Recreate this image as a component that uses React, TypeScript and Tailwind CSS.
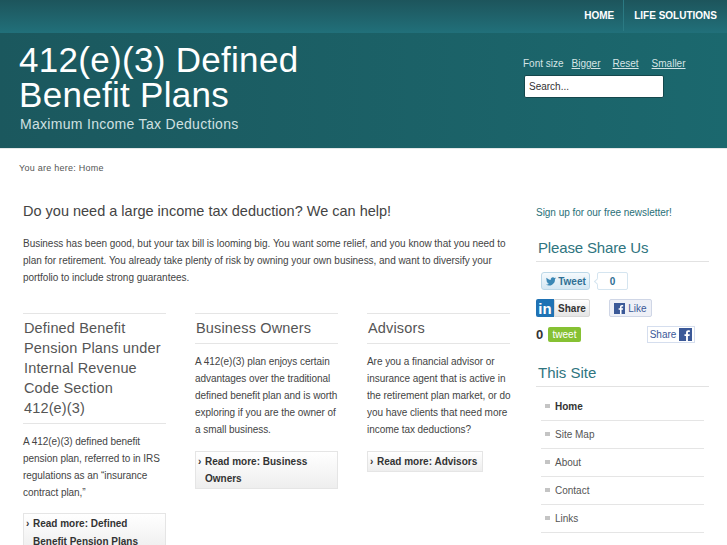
const FONT = "font-['Liberation_Sans',Arial,sans-serif]"

const columns = [
    {
        title: 'Defined Benefit Pension Plans under Internal Revenue Code Section 412(e)\u2060(3)',
        body: 'A 412(e)(3) defined benefit pension plan, referred to in IRS regulations as an “insurance contract plan,”',
        more: 'Read more: Defined Benefit Pension Plans',
    },
    {
        title: 'Business Owners',
        body: 'A 412(e)(3) plan enjoys certain advantages over the traditional defined benefit plan and is worth exploring if you are the owner of a small business.',
        more: 'Read more: Business Owners',
    },
    {
        title: 'Advisors',
        body: 'Are you a financial advisor or insurance agent that is active in the retirement plan market, or do you have clients that need more income tax deductions?',
        more: 'Read more: Advisors',
    },
]

const siteLinks = ['Home', 'Site Map', 'About', 'Contact', 'Links']

function FbMark({ className }: { className: string }) {
    return (
        <svg viewBox="0 0 14 14" className={className}>
            <rect width="14" height="14" fill="#3b5998" />
            <path d="M9.6 14V8.6h1.7l.3-2H9.6V5.4c0-.6.2-1 1-1h1.100V2.600c-.3 0-.9-.1-1.600-.1-1.500 0-2.500.9-2.500 2.600v1.500H5.900v2h1.700V14z" fill="#fff" />
        </svg>
    )
}

function TwitterBird({ className }: { className: string }) {
    return (
        <svg viewBox="0 0 24 24" className={className} fill="#3a87b5">
            <path d="M23 5c-.8.400-1.700.600-2.600.700.900-.600 1.600-1.400 2-2.500-.900.500-1.800.900-2.900 1.100a4.500 4.500 0 0 0-7.800 4.100C7.900 8.200 4.600 6.400 2.400 3.600c-1.200 2-.600 4.600 1.400 6-.700 0-1.400-.200-2-.600 0 2.200 1.500 4.100 3.600 4.500-.700.200-1.400.200-2 .100.600 1.800 2.300 3.100 4.200 3.100A9 9 0 0 1 1 18.600 12.800 12.800 0 0 0 20.700 7.200c.900-.600 1.700-1.300 2.300-2.200z" />
        </svg>
    )
}

export default function App() {
    return (
        <div className={`h-[545px] w-[727px] overflow-hidden bg-white ${FONT}`}>
            <div className="flex h-[33px] justify-end bg-gradient-to-b from-[#1d555c] to-[#21707a] pb-[2px]">
                <a className="flex items-center border-r border-[#2b7a83] pr-[9px] text-[10px] font-bold text-white">HOME</a>
                <a className="flex items-center px-[10px] text-[10px] font-bold text-white">LIFE SOLUTIONS</a>
            </div>
            <header className="flex h-[116px] justify-between border-b border-[#e4e8e8] bg-gradient-to-r from-[#1b585e] to-[#1b686e] pl-[19px] pr-[63px]">
                <div className="w-[320px] pt-[9px]">
                    <h1 className="text-[35px] leading-[35px] tracking-[0.3px] text-white">412(e)(3) Defined Benefit Plans</h1>
                    <p className="mt-[2px] pl-[1px] text-[14px] leading-[20px] tracking-[0.3px] text-[#cfe0e1]">Maximum Income Tax Deductions</p>
                </div>
                <div className="w-[141px] pt-[25px]">
                    <div className="flex whitespace-nowrap text-[10px] leading-[12px] text-[#d5e4e5]">
                        <span className="mr-[8px]">Font size</span>
                        <a className="mr-[12px] underline">Bigger</a>
                        <a className="mr-[13px] underline">Reset</a>
                        <a className="underline">Smaller</a>
                    </div>
                    <div className="ml-[1px] mt-[5px] flex h-[23px] w-[140px] items-center rounded-[2px] border border-[#14474c] bg-white pl-[4px] text-[10px] text-[#333]">
                        Search...
                    </div>
                </div>
            </header>
            <div className="flex h-[39px] items-center pl-[19px] text-[9px] tracking-[0.25px] text-[#555]">You are here: Home</div>
            <main className="flex pl-[23px]">
                <div className="w-[487px]">
                    <h2 className="mt-[13px] text-[14.5px] leading-[20px] text-[#444]">Do you need a large income tax deduction? We can help!</h2>
                    <p className="mt-[14px] text-[10px] leading-[17.2px] tracking-[-0.03px] text-[#444]">
                        Business has been good, but your tax bill is looming big. You want some relief, and you know that you need to plan for retirement. You already take plenty of risk by owning your own business, and want to diversify your portfolio to include strong guarantees.
                    </p>
                    <div className="mt-[26px] flex gap-[29px]">
                        {columns.map((col) => (
                            <section key={col.title} className="w-[143px] shrink-0">
                                <h3 className="border-y border-[#e5e5e5] pb-[5px] pl-[1px] pt-[4px] text-[14.5px] leading-[20px] tracking-[0.15px] text-[#555]">{col.title}</h3>
                                <p className="-mr-[3px] mt-[9px] text-[10px] leading-[17.2px] tracking-[-0.05px] text-[#444]">{col.body}</p>
                                <a className="relative mt-[12px] block w-fit border border-[#e5e5e5] bg-gradient-to-b from-white to-[#eeeeee] py-[1px] pl-[9px] pr-[5px] text-[10px] font-bold leading-[17.4px] text-[#333]">
                                    <span className="absolute left-[2px] top-[1px]">›</span>
                                    {col.more}
                                </a>
                            </section>
                        ))}
                    </div>
                </div>
                <aside className="ml-[26px] w-[173px]">
                    <a className="mt-[18px] block text-[10px] leading-[14px] tracking-[-0.03px] text-[#2a6f78]">Sign up for our free newsletter!</a>
                    <h3 className="mt-[18px] border-b border-[#e2e2e2] pb-[3px] pl-[2px] text-[15px] leading-[20px] tracking-[-0.15px] text-[#2f7580]">Please Share Us</h3>
                    <div className="mt-[10px] flex h-[18px] pl-[5px]">
                        <span className="flex h-[18px] w-[49px] items-center justify-center gap-[1px] rounded-[3px] border border-[#bcd8e8] bg-gradient-to-b from-[#f5fafd] to-[#d5e7f3] text-[10px] font-bold text-[#2f6f94]">
                            <TwitterBird className="h-[11px] w-[12px]" />
                            Tweet
                        </span>
                        <span className="relative ml-[7px] flex h-[18px] w-[31px] items-center justify-center rounded-[2px] border border-[#d5e5f0] bg-white text-[10px] font-bold text-[#2f6f94]">
                            <span className="absolute -left-[3px] top-[6px] h-[5px] w-[5px] rotate-45 border-b border-l border-[#d5e5f0] bg-white" />
                            0
                        </span>
                    </div>
                    <div className="mt-[9px] flex h-[18px] items-center">
                        <span className="flex h-[18px] w-[18px] items-center justify-center rounded-l-[2px] bg-[#1f72b4] text-[15px] font-bold leading-none text-white">in</span>
                        <span className="flex h-[18px] w-[36px] items-center justify-center rounded-r-[2px] border border-[#d8d8d8] bg-gradient-to-b from-white to-[#e4e4e4] text-[10px] font-bold text-[#333]">Share</span>
                        <span className="ml-[19px] flex h-[18px] w-[43px] items-center justify-center gap-[3px] rounded-[2px] border border-[#cfd6e6] bg-[#eef0f7] text-[10px] text-[#3b5998]">
                            <FbMark className="h-[11px] w-[11px]" />
                            Like
                        </span>
                    </div>
                    <div className="mt-[9px] flex h-[17px] items-center">
                        <span className="w-[12px] text-[13px] font-bold text-[#333]">0</span>
                        <span className="mb-[1px] flex h-[15px] w-[33px] items-center justify-center rounded-[2px] bg-[#86c133] text-[10px] text-white">tweet</span>
                        <span className="ml-[66px] flex h-[17px] w-[48px] items-center justify-center gap-[3px] border border-[#d5deee] text-[10px] text-[#3b5998]">
                            Share
                            <FbMark className="h-[13px] w-[13px]" />
                        </span>
                    </div>
                    <h3 className="mt-[20px] border-b border-[#e2e2e2] pb-[3px] pl-[2px] text-[15px] leading-[20px] text-[#2f7580]">This Site</h3>
                    <ul className="mt-[6px] px-[5px]">
                        {siteLinks.map((link, i) => (
                            <li key={link} className="flex h-[28px] items-center border-b border-[#e5e5e5] pb-[1px] pl-[4px] text-[10px] text-[#555]">
                                <span className="mr-[5px] h-[4px] w-[5px] bg-[#c4c4c4]" />
                                <span className={i === 0 ? 'font-bold text-[#333]' : ''}>{link}</span>
                            </li>
                        ))}
                    </ul>
                </aside>
            </main>
        </div>
    )
}
